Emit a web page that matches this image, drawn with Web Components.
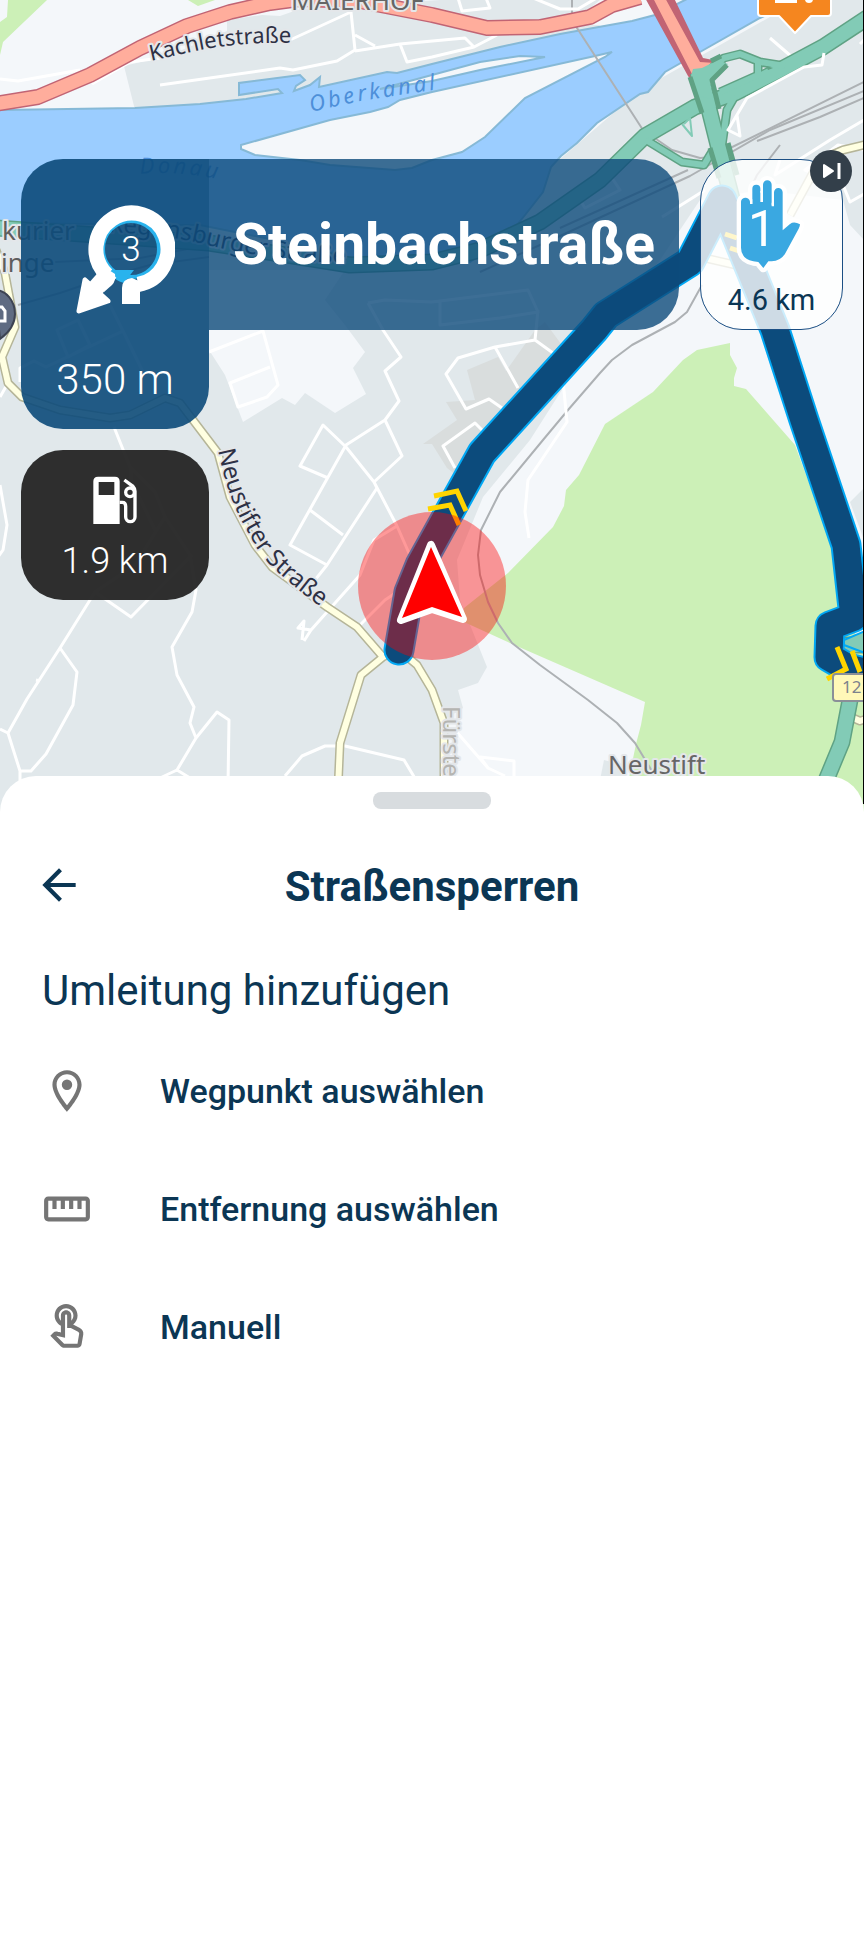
<!DOCTYPE html>
<html lang="de">
<head>
<meta charset="utf-8">
<meta name="viewport" content="width=device-width, initial-scale=1">
<title>Straßensperren</title>
<style>
    html, body {
        margin: 0;
        min-height: 100vh;
    }

    body {
        display: flex;
        flex-direction: column;
        background: #fff;
        color: #0b3654;
        font-family: Roboto, "Liberation Sans", sans-serif;
    }

    map-stage {
        flex: none;
    }

    bottom-sheet {
        flex: 1;
    }
</style>
</head>
<body>
    <map-stage>
        <map-canvas></map-canvas>
        <turn-card slot="left" exit="3">350 m</turn-card>
        <fuel-card slot="left">1.9 km</fuel-card>
        <street-banner slot="street">Steinbachstraße</street-banner>
        <stop-card slot="stop" number="1">4.6 km</stop-card>
    </map-stage>

    <bottom-sheet heading="Straßensperren">
        <detour-list heading="Umleitung hinzufügen">
            <detour-option icon="place">Wegpunkt auswählen</detour-option>
            <detour-option icon="ruler">Entfernung auswählen</detour-option>
            <detour-option icon="touch">Manuell</detour-option>
        </detour-list>
    </bottom-sheet>

<script>
class MapStage extends HTMLElement {
    constructor() {
        super();
        this.attachShadow({ mode: 'open' });
    }

    connectedCallback() {
        this.shadowRoot.innerHTML = `
        <style>
            :host {
                display: block;
                position: relative;
                overflow: hidden;
            }

            .hud {
                position: absolute;
                inset: 0;
                display: flex;
                align-items: flex-start;
                padding: 159px 21px 0;
            }

            .left {
                flex: none;
                width: 188px;
                display: flex;
                flex-direction: column;
                gap: 21px;
            }

            .street {
                flex: 1;
                min-width: 0;
            }

            .stop {
                flex: none;
                width: 143px;
                margin-left: 21px;
            }
        </style>
        <slot></slot>
        <div class="hud">
            <div class="left"><slot name="left"></slot></div>
            <div class="street"><slot name="street"></slot></div>
            <div class="stop"><slot name="stop"></slot></div>
        </div>
        `;
    }
}
customElements.define("map-stage", MapStage);


class MapCanvas extends HTMLElement {
    constructor() {
        super();
        this.attachShadow({ mode: 'open' });
    }

    connectedCallback() {
        this.shadowRoot.innerHTML = `
        <style>
            :host {
                display: block;
            }

            svg {
                display: block;
                width: 100%;
                height: auto;
                background: #f4f7fa;
                font-family: "Noto Sans", "Open Sans", sans-serif;
            }

            .town { fill: #e1e8eb; }
            .block { fill: #d9dddd; }
            .open { fill: #f4f7fa; }
            .park { fill: #ccf0b7; }
            .water { fill: #9bcdff; stroke: #86b9d6; stroke-width: 2; }
            .island { fill: #f4f7fa; stroke: #86b9d6; stroke-width: 2; }
            .line { fill: none; stroke-linejoin: round; }
            .local { stroke: #fff; stroke-width: 3; }
            .rail { stroke: #adb1b4; stroke-width: 2; }
            .minor-edge { stroke: #b5b598; stroke-width: 9; }
            .minor { stroke: #ffffe1; stroke-width: 6; }
            .red-edge { stroke: #c16474; stroke-width: 16; }
            .red { stroke: #ffad9c; stroke-width: 13; }
            .green-edge { stroke: #5fa284; stroke-width: 17; }
            .green { stroke: #82cbb6; stroke-width: 14; }
            .ramp-edge { stroke: #5fa284; stroke-width: 9; }
            .ramp { stroke: #82cbb6; stroke-width: 6; }
            .route-edge { stroke: #02a8f4; stroke-width: 31; stroke-linecap: round; }
            .route { stroke: #0c4b7c; stroke-width: 27; stroke-linecap: round; }
            .chevron { stroke: #ffd400; stroke-width: 5; stroke-linejoin: miter; }

            text {
                paint-order: stroke;
                stroke: #e4e7ea;
                stroke-width: 4px;
                stroke-linejoin: round;
            }
            .road-name { font-size: 24px; fill: #2e3145; }
            .road-name.small { font-size: 22px; }
            .place-name { font-size: 26px; fill: #666; }
            .poi-name { font-size: 26px; fill: #5e5e5e; }
            .water-name {
                font-size: 22px;
                font-style: italic;
                letter-spacing: 3px;
                fill: #4d8fd9;
                stroke: none;
            }
            .faded { fill: #b5b5b2; }
            .shield { font-size: 17px; fill: #7d828c; stroke: none; }
        </style>
        <svg viewBox="0 0 864 812" role="img" aria-label="Karte">
            <defs>
                <path id="kachlet" d="M151 61L200 50Q240 42 292 43"/>
                <path id="oberkanal" d="M311 112L360 101L460 86"/>
                <path id="donau" d="M140 174Q190 170 240 185"/>
                <path id="regensburger" d="M108 232Q160 234 200 243Q280 264 380 264"/>
                <path id="neustifter" d="M218 450Q226 490 241 520L258 550Q275 575 335 617"/>
            </defs>

            <!-- land use -->
            <path class="town" d="M124 66L170 55L227 31V20L262 15L280 16L300 9L440 0H600L570 25L600 25L560 60L300 110L135 110Z"/>
            <path class="town" d="M0 215L510 235L551 167L640 90L800 0H864V240L850 225L843 200L760 190L700 200L660 260L600 330L530 440L483 497L457 560L460 600L487 667L478 683L458 690L463 708L444 720V812H0Z"/>
            <path class="town" d="M864 488L850 502L864 540ZM604 760L626 766V790H598Z"/>
            <path class="open" d="M209 270H345L325 300L345 325L365 352L353 368L366 394L335 413L305 393L295 405L282 398L243 422L225 375L209 350Z"/>
            <path class="block" d="M545 322L564 348L460 478L447 468L432 444L423 444L457 420L446 402L475 400L467 370L498 357L506 371L535 330Z"/>
            <path class="park" d="M730 343L730 355L737 368L734 378V386L746 389L795 445L832 545L845 620L864 645V812H622L636 744L641 725L645 702L512 644L464 622V608L508 573L553 527L564 506L566 490L579 475L605 424L653 392L683 360L697 350Z"/>
            <path class="park" d="M8 0H47L3 42L0 55V22L7 17ZM158 0L167 -2ZM188 0L198 6L215 0Z"/>

            <!-- Donau and Oberkanal -->
            <path class="water" d="M-4 110L135 108L200 104L246 99L282 93L278 89L239 95V83L300 75L305 80L296 86L294 91L310 85L320 77L319 87L387 72L397 73L432 64L500 47L560 34L632 21L655 15L693 -4H806L760 18L700 52L665 72L648 92L640 94L597 123L577 143L561 156L551 167L543 192L525 215L512 231L470 262L380 265L300 245L200 225L-4 223Z"/>
            <path class="island" d="M241 145L330 120L370 112L388 107L400 100L432 92L595 56L612 52L605 57L525 98L485 137L462 152L432 160L412 168L395 170L330 165L300 160L255 155L241 149Z"/>
            <path class="island" d="M380 89L432 75L480 62L520 56L545 57L480 70L432 81Z"/>

            <!-- railways -->
            <path class="line rail" d="M572 -2V20L577 28L643 130L672 150L700 158L712 157L864 82"/>
            <path class="line rail" d="M864 91L770 130L690 176L560 236L480 272M864 98L820 117L757 141M688 170L560 228M780 145L757 175L750 190"/>
            <path class="line rail" d="M702 285L687 312L675 322L632 345L612 360L600 373L568 410L543 440L500 492L481 530L478 555L480 575L488 602L498 623L512 643L540 665L588 700L617 723L635 743L655 776"/>
            <path class="line rail" d="M18 305L60 293L110 276L150 265L209 257M55 262L140 258L209 245"/>

            <!-- local streets -->
            <path class="line local" d="M0 79L18 81L80 70M92 84L130 62L160 58M290 40L351 12L355 50L337 61L293 70L280 68L160 85M355 35L375 46M355 51L400 44L465 38L474 47L432 57L407 62L400 44M474 47L497 35M458 -2L462 11L490 8L486 -2M533 -2L560 9L578 9L600 -4M770 38L792 57"/>
            <path class="line local" d="M864 120L830 140L775 175L780 160M864 150L838 145L805 170L830 180M843 185L850 202L864 194M662 217L705 190M580 200L585 208L620 190L612 178M864 40L860 44"/>
            <path class="line local" d="M209 352L263 331L278 385L267 397L238 407L230 383L270 367M368 303L385 300L432 302M368 303L383 330L401 357L385 371L399 401L385 420L402 456L374 482L346 447L323 425L300 466L328 478M385 420L346 445L290 545L327 565L377 488L374 482L397 526M310 510L343 535M327 565L315 580M304 641L311 630L360 575L374 540L397 526L412 560M311 630L298 628L304 621L302 640M360 625L385 600L400 590"/>
            <path class="line local" d="M114 427L130 467L155 492L165 517L190 555L196 590L192 612L172 647L177 675L194 707L190 723L196 738L177 770L160 778M196 738L217 712L229 720L228 785M177 770L190 778M131 467V480L155 530M165 517L135 565L95 592L131 617L192 555M95 592L60 648L27 699L8 733L20 771V790M60 648L77 672L73 705L46 754L31 771H20M0 729L8 733M0 485L7 525L3 550L-2 557M0 397L8 383M36 680L40 681M285 776L302 756L325 746H345L404 760L416 780M20 382V368L34 361L46 367L123 331L110 305M57 330L78 320L90 345L68 357ZM123 331L143 372"/>
            <path class="line local" d="M538 310L535 340L495 347L458 358L446 374L466 409L489 399L502 408M495 347L518 388M535 340L553 353M455 468L443 446L475 423L484 432M562 370L567 422L528 480L525 512L529 538M455 730L488 768L480 757L514 761V780M488 768L505 776M432 302L528 290L538 312L500 318L440 325V302"/>

            <!-- yellow roads -->
            <g id="minor-roads"></g>

            <!-- federal road, red -->
            <path class="line red-edge" d="M-5 104L38 97L90 75L140 48L187 26L230 12L270 3L300 -1L360 1L432 15L487 28L540 27L590 17L612 5L640 -3"/>
            <path class="line red" d="M-5 104L38 97L90 75L140 48L187 26L230 12L270 3L300 -1L360 1L432 15L487 28L540 27L590 17L612 5L640 -3"/>
            <path fill="#c16474" d="M644 -4H673L703 58L718 61L691 80L688 76Z"/>
            <path fill="#ffad9c" d="M652 -4H664L700 62L715 63L692 74Z"/>

            <!-- junction, green -->
            <path class="line ramp-edge" d="M712 68L724 58L740 54L760 62L785 66M758 62V75L720 92M735 96L727 110L722 145M646 140L682 162L704 165L713 150"/>
            <path class="line green-edge" d="M870 16L823 47L780 70L735 93L695 107L645 136L600 180L540 222L480 250L432 262L350 265L209 243L-5 228"/>
            <path class="line green-edge" d="M698 72L708 105L718 145L735 210"/>
            <path class="line green" d="M698 72L708 105L718 145L735 210"/>
            <path class="line green" d="M870 16L823 47L780 70L735 93L695 107L645 136L600 180L540 222L480 250L432 262L350 265L209 243L-5 228"/>
            <path class="line ramp" d="M712 68L724 58L740 54L760 62L785 66M758 62V75L720 92M735 96L727 110L722 145M646 140L682 162L704 165L713 150"/>
            <path fill="#82cbb6" d="M691 76L693 69L702 68L718 60L728 64L710 82L714 100L700 96Z"/>
            <path class="line" stroke="#5fa284" stroke-width="5" d="M690 77L702 113M727 65L712 80L719 109M711 61L721 56M710 148L719 178M728 143L737 175"/>
            <path class="line" stroke="#82cbb6" stroke-width="2" d="M682 124L692 136L690 118L684 124"/>
            <path fill="#5fa284" d="M766 66L773 68L768 70Z"/>
            <path class="line local" d="M824 53L822 65L804 67L780 80L747 98L728 130L740 136L737 115"/>
            <path class="line green-edge" d="M845 645H870M850 700L842 742L820 795"/>
            <path class="line green" d="M845 645H870M850 700L842 742L820 795"/>

            <!-- active route -->
            <path class="line route-edge" d="M399 650L409 592L420 565L482 453L594 330L606 315L690 262L722 200L775 330L804 420L846 545L854 617L830 626L829 657L848 668L880 676"/>
            <path class="line route" d="M399 650L409 592L420 565L482 453L594 330L606 315L690 262L722 200L775 330L804 420L846 545L854 617L830 626L829 657L848 668L880 676"/>
            <path fill="#82cbb6" stroke="#02a8f4" stroke-width="2" d="M870 629L844 640V645L870 655Z"/>
            <path class="line chevron" d="M434 496L457 491L466 511M428 509L450 505L459 525M837 647L846 669L827 679M852 651L860 672M725 234L737 238M730 248L739 251"/>

            <!-- road shield -->
            <rect x="833" y="674" width="40" height="27" rx="3" fill="#fff8b8" stroke="#8a8f98" stroke-width="2"/>
            <text class="shield" x="842" y="693">12</text>

            <!-- labels -->
            <text class="place-name" x="291" y="10">MAIERHOF</text>
            <text class="road-name small"><textPath href="#kachlet">Kachletstraße</textPath></text>
            <text class="water-name"><textPath href="#oberkanal">Oberkanal</textPath></text>
            <text class="water-name"><textPath href="#donau">Donau</textPath></text>
            <text class="road-name"><textPath href="#regensburger">Regensburger Straße</textPath></text>
            <text class="road-name"><textPath href="#neustifter">Neustifter Straße</textPath></text>
            <text class="road-name faded" transform="translate(443 706) rotate(90)">Fürste</text>
            <text class="place-name" x="608" y="774">Neustift</text>
            <text class="poi-name" x="2" y="240">kurier</text>
            <text class="poi-name" x="1" y="272">inge</text>

            <!-- camera pin -->
            <path fill="#5f6b82" stroke="#3d4352" stroke-width="2" d="M-5 290A20 24 0 0 1 15 314Q15 328 0 339Z"/>
            <path fill="none" stroke="#fff" stroke-width="3" d="M-2 307H2L5 311V321H-2"/>

            <!-- warning marker -->
            <path fill="#f5861f" stroke="#fff" stroke-width="2" stroke-linejoin="round" d="M758 -4V13Q758 16 761 16H779L795 33L811 16H828Q831 16 831 13V-4Z"/>
            <rect x="775" y="-2" width="22" height="5" fill="#fff"/>
            <circle cx="809" cy="-1" r="4" fill="#fff"/>

            <!-- own position -->
            <circle cx="432" cy="586" r="74" fill="#f00" fill-opacity=".4"/>
            <path fill="#f00" stroke="#fff" stroke-width="8" stroke-linejoin="round" d="M431 545L401 620L432 609L463 619Z"/>
            <path fill="#f00" d="M431 547L402 618L432 607L462 617Z"/>

            <rect x="863" y="0" width="1" height="804" fill="#000"/>
        </svg>
        `;

        const minorRoads = [
            "M-4 250L5 273L15 327L2 357L8 383L22 397L60 410L110 418L130 415L165 398L180 403L218 453L230 497L255 545L272 567L327 607L357 627L383 657L361 675L340 743L337 812",
            "M383 657L399 650L417 665L432 690L444 723V812",
            "M864 145L843 150L820 160L790 215",
            "M705 258L740 266",
            "M853 718L860 721L866 719"
        ];
        const group = this.shadowRoot.querySelector("#minor-roads");
        group.innerHTML = ["minor-edge", "minor"].map((name) =>
            `<path class="line ${name}" d="${minorRoads.join("")}"/>`
        ).join("");
    }
}
customElements.define("map-canvas", MapCanvas);


class TurnCard extends HTMLElement {
    constructor() {
        super();
        this.attachShadow({ mode: 'open' });
    }

    connectedCallback() {
        this.shadowRoot.innerHTML = `
        <style>
            :host {
                display: flex;
                flex-direction: column;
                align-items: center;
                box-sizing: border-box;
                height: 270px;
                padding-top: 44px;
                gap: 40px;
                border-radius: 42px 0 42px 42px;
                background: rgba(12, 74, 122, .9);
                color: #fff;
                font-size: 42px;
                font-weight: 300;
                line-height: 50px;
            }

            svg {
                display: block;
                width: 120px;
                height: 112px;
            }
        </style>
        <svg viewBox="55 203 120 112" aria-hidden="true">
            <circle cx="131" cy="249" r="28" fill="none" stroke="#29b3ed" stroke-width="4"/>
            <path fill="#29b3ed" d="M112 270H134L124 283Q116 281 110 274Z"/>
            <path fill="none" stroke="#fff" stroke-width="15" d="M138 284.500A36 36 0 1 0 107 275"/>
            <path fill="#fff" d="M122 304V288Q122 279 132 278L146 284Q140 290 140 292V304Z"/>
            <path fill="none" stroke="#fff" stroke-width="17" d="M110 272L94 290"/>
            <path fill="#fff" d="M106 268L115 274Q116 281 112 285L104 292Z"/>
            <path fill="#fff" stroke="#fff" stroke-width="5" stroke-linejoin="round" d="M85 280L79 311L108 301Z"/>
            <text x="131" y="261" text-anchor="middle" font-size="35" font-weight="300" fill="#fff">${this.getAttribute("exit")}</text>
        </svg>
        <span><slot></slot></span>
        `;
    }
}
customElements.define("turn-card", TurnCard);


class FuelCard extends HTMLElement {
    constructor() {
        super();
        this.attachShadow({ mode: 'open' });
    }

    connectedCallback() {
        this.shadowRoot.innerHTML = `
        <style>
            :host {
                display: flex;
                flex-direction: column;
                align-items: center;
                box-sizing: border-box;
                height: 150px;
                padding-top: 24px;
                gap: 14px;
                border-radius: 42px;
                background: rgba(36, 36, 36, .95);
                color: #fff;
                font-size: 36px;
                font-weight: 300;
                line-height: 42px;
            }

            svg {
                display: block;
                width: 50px;
                height: 52px;
            }
        </style>
        <svg viewBox="271 162 150 156" aria-hidden="true">
            <path fill="#fff" fill-rule="evenodd" d="M281 312V184Q281 170 295 170H346Q360 170 360 184V312ZM297 186V225H344V186Z"/>
            <path fill="none" stroke="#fff" stroke-width="10" d="M360 247H368Q378 247 378 259V291A14 14 0 0 0 406 291V214Q406 205 400 199L374 180"/>
            <circle cx="391" cy="217" r="13" fill="none" stroke="#fff" stroke-width="10"/>
        </svg>
        <span><slot></slot></span>
        `;
    }
}
customElements.define("fuel-card", FuelCard);


class StreetBanner extends HTMLElement {
    constructor() {
        super();
        this.attachShadow({ mode: 'open' });
    }

    connectedCallback() {
        this.shadowRoot.innerHTML = `
        <style>
            :host {
                display: flex;
                align-items: center;
                justify-content: center;
                height: 171px;
                border-radius: 0 42px 42px 0;
                background: rgba(12, 74, 122, .8);
                color: #fff;
                font-size: 57px;
                font-weight: 700;
                line-height: 66px;
            }
        </style>
        <span><slot></slot></span>
        `;
    }
}
customElements.define("street-banner", StreetBanner);


class StopCard extends HTMLElement {
    constructor() {
        super();
        this.attachShadow({ mode: 'open' });
    }

    connectedCallback() {
        this.shadowRoot.innerHTML = `
        <style>
            :host {
                display: flex;
                flex-direction: column;
                align-items: center;
                position: relative;
                box-sizing: border-box;
                height: 171px;
                padding-top: 16px;
                gap: 4px;
                border: 1px solid #1b4f84;
                border-radius: 42px;
                background: rgba(255, 255, 255, .8);
                font-size: 29px;
                line-height: 36px;
            }

            svg {
                display: block;
            }

            .hand {
                width: 73px;
                height: 102px;
            }

            button {
                position: absolute;
                top: -10px;
                right: -10px;
                width: 42px;
                height: 42px;
                padding: 0;
                border: 0;
                border-radius: 50%;
                background: #333f4a;
                cursor: pointer;
            }
        </style>
        <svg class="hand" viewBox="135 80 219 306" aria-hidden="true">
            <path fill="#3aa8e1" stroke="#fff" stroke-width="26" stroke-linejoin="round" paint-order="stroke" d="M153 160A13 13 0 0 1 180 157V164H187V118A12 12 0 0 1 211 118V130H219V106A13 13 0 0 1 245 106V168H252V129A13 13 0 0 1 278 129V243L300 224Q312 215 330 225Q330 230 326 238L286 312Q272 335 245 336H235L220 356L205 338L190 336Q153 328 153 295Z"/>
            <path fill="#fff" d="M181 150H187V164H181ZM211 125H219V158H211ZM245 160H252V171H245Z"/>
            <text x="216" y="290" text-anchor="middle" font-size="150" fill="#fff">${this.getAttribute("number")}</text>
        </svg>
        <span><slot></slot></span>
        <button type="button" aria-label="Zwischenziel überspringen">
            <svg width="42" height="42" viewBox="0 0 42 42" aria-hidden="true">
                <path fill="#fff" stroke="#fff" stroke-width="2" stroke-linejoin="round" d="M14 15V27L23 21Z"/>
                <path stroke="#fff" stroke-width="3" d="M29 13V29"/>
            </svg>
        </button>
        `;
    }
}
customElements.define("stop-card", StopCard);


class BottomSheet extends HTMLElement {
    constructor() {
        super();
        this.attachShadow({ mode: 'open' });
    }

    connectedCallback() {
        this.shadowRoot.innerHTML = `
        <style>
            :host {
                display: block;
                position: relative;
                margin-top: -36px;
                padding-top: 16px;
                border-radius: 36px 36px 0 0;
                background: #fff;
            }

            .handle {
                width: 118px;
                height: 17px;
                margin: 0 auto;
                border-radius: 8px;
                background: #d8dcdf;
            }

            header {
                display: grid;
                grid-template-columns: 50px 1fr 50px;
                align-items: start;
                margin-top: 51px;
                padding: 0 34px;
            }

            button {
                width: 50px;
                height: 50px;
                padding: 0;
                border: 0;
                background: none;
                color: inherit;
                cursor: pointer;
            }

            svg {
                display: block;
            }

            h1 {
                margin: 0;
                font-size: 42px;
                font-weight: 700;
                line-height: 54px;
                text-align: center;
            }
        </style>
        <div class="handle"></div>
        <header>
            <button type="button" aria-label="Zurück">
                <svg width="50" height="50" viewBox="0 0 24 24" fill="currentColor" aria-hidden="true">
                    <path d="M20 11H7.830l5.590-5.590L12 4l-8 8 8 8 1.410-1.410L7.830 13H20v-2z"/>
                </svg>
            </button>
            <h1>${this.getAttribute("heading")}</h1>
        </header>
        <slot></slot>
        `;
    }
}
customElements.define("bottom-sheet", BottomSheet);


class DetourList extends HTMLElement {
    constructor() {
        super();
        this.attachShadow({ mode: 'open' });
    }

    connectedCallback() {
        this.shadowRoot.innerHTML = `
        <style>
            :host {
                display: block;
                padding: 50px 42px 0;
            }

            h2 {
                margin: 0 0 14px;
                font-size: 42px;
                font-weight: 400;
                line-height: 54px;
            }
        </style>
        <h2>${this.getAttribute("heading")}</h2>
        <slot></slot>
        `;
    }
}
customElements.define("detour-list", DetourList);


const optionIcons = {
    place: "M12 2C8.130 2 5 5.130 5 9c0 5.250 7 13 7 13s7-7.750 7-13c0-3.870-3.130-7-7-7zM7 9c0-2.760 2.240-5 5-5s5 2.240 5 5c0 2.880-2.880 7.190-5 9.880C9.920 16.210 7 11.850 7 9zM12 6.500a2.500 2.500 0 1 0 0 5a2.500 2.500 0 1 0 0-5z",
    ruler: "M21 6H3c-1.100 0-2 .9-2 2v8c0 1.100.9 2 2 2h18c1.100 0 2-.9 2-2V8c0-1.100-.9-2-2-2zm0 10H3V8h2v4h2V8h2v4h2V8h2v4h2V8h2v4h2V8h2v8z",
    touch: "M18.190 12.440l-3.240-1.620c1.290-1 2.120-2.560 2.120-4.320 0-3.030-2.470-5.500-5.500-5.500s-5.500 2.470-5.500 5.500c0 2.130 1.220 3.980 3 4.890v3.260c-2.110-.45-2.010-.44-2.260-.44-.53 0-1.030.21-1.410.59L4 16.220l5.090 5.090c.43.44 1.030.69 1.650.69h6.300c.98 0 1.810-.7 1.970-1.670l.8-4.710c.22-1.300-.43-2.580-1.620-3.180zm-.35 2.850l-.8 4.710h-6.300c-.09 0-.17-.04-.24-.1l-3.680-3.680 4.250.89V6.500c0-.28.22-.5.5-.5s.5.22.5.5v6h1.760l3.460 1.730c.4.2.62.63.55 1.060zM8.070 6.500c0-1.930 1.570-3.500 3.500-3.500s3.500 1.570 3.500 3.500c0 .95-.38 1.810-1 2.440V6.500c0-1.380-1.120-2.500-2.500-2.500s-2.500 1.120-2.500 2.500v2.440c-.62-.63-1-1.490-1-2.440z"
};

class DetourOption extends HTMLElement {
    constructor() {
        super();
        this.attachShadow({ mode: 'open' });
    }

    connectedCallback() {
        this.shadowRoot.innerHTML = `
        <style>
            :host {
                display: block;
            }

            button {
                display: flex;
                align-items: center;
                gap: 68px;
                width: 100%;
                height: 118px;
                padding: 0;
                border: 0;
                background: none;
                color: inherit;
                font: 500 34px/40px Roboto, "Liberation Sans", sans-serif;
                text-align: left;
                cursor: pointer;
            }

            svg {
                flex: none;
                width: 50px;
                height: 50px;
                fill: #757575;
            }
        </style>
        <button type="button">
            <svg viewBox="0 0 24 24" aria-hidden="true"><path d="${optionIcons[this.getAttribute("icon")]}"/></svg>
            <span><slot></slot></span>
        </button>
        `;
    }
}
customElements.define("detour-option", DetourOption);
</script>
</body>
</html>
